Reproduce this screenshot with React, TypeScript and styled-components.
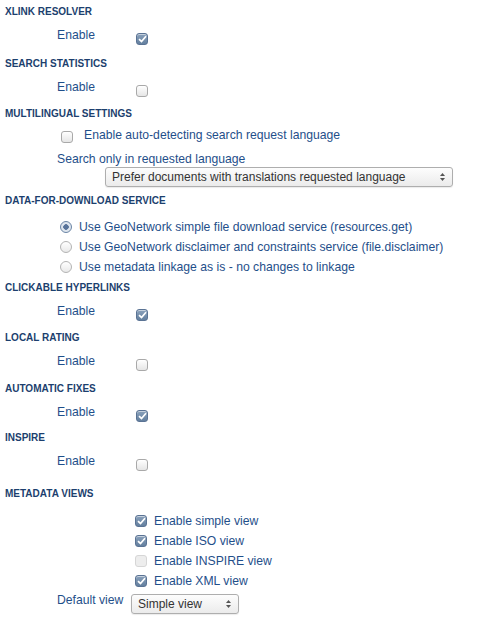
import styled, { createGlobalStyle, css } from "styled-components";

const GlobalStyle = createGlobalStyle`
  body {
    margin: 0;
    background: #fff;
    font-family: "Liberation Sans", Arial, sans-serif;
    font-size: 12.2px;
    color: #1f4f8a;
  }
`;

const Page = styled.form`
  width: 483px;
  padding-top: 5px;
`;

const Section = styled.section<{ $gap?: number }>`
  margin-bottom: ${(p) => p.$gap ?? 10}px;
`;

const Heading = styled.h2`
  margin: 0;
  padding: 0 5px;
  font-size: 10px;
  line-height: 14px;
  font-weight: bold;
  text-transform: uppercase;
  color: #1c3f6e;
`;

const Rows = styled.div<{ $top?: number }>`
  display: flex;
  flex-direction: column;
  margin-top: ${(p) => p.$top ?? 6}px;
`;

// label column + control, like the "Enable" lines
const FieldRow = styled.div<{ $top?: number }>`
  display: flex;
  align-items: flex-start;
  min-height: 20px;
  margin-top: ${(p) => p.$top ?? 0}px;
`;

const FieldLabel = styled.label<{ $lh?: number }>`
  width: 74px;
  padding-left: 57px;
  line-height: ${(p) => p.$lh ?? 20}px;
  flex-shrink: 0;
`;

const CheckRow = styled.label<{ $indent: number; $gap: number }>`
  display: flex;
  align-items: center;
  gap: ${(p) => p.$gap}px;
  padding-left: ${(p) => p.$indent}px;
  height: 20px;
  line-height: 20px;
`;

const RaisedText = styled.span`
  margin-top: -4px;
`;

const PlainLabel = styled.div`
  padding-left: 57px;
  line-height: 16px;
  margin-top: 4px;
`;

const boxBase = css`
  display: inline-flex;
  align-items: center;
  justify-content: center;
  flex-shrink: 0;
  box-sizing: border-box;
  width: 12px;
  height: 12px;
`;

const Box = styled.span<{ $checked?: boolean; $disabled?: boolean; $offset?: number }>`
  ${boxBase}
  border-radius: 3px;
  margin-top: ${(p) => p.$offset ?? 0}px;
  margin-left: ${(p) => (p.$offset ? 5 : 0)}px;
  border: 1px solid ${(p) => (p.$checked ? "#5a7394" : p.$disabled ? "#d6d6d6" : "#a9a9a9")};
  background: ${(p) =>
    p.$checked
      ? "linear-gradient(#8aa1bb, #64809f)"
      : p.$disabled
      ? "#ededed"
      : "linear-gradient(#ffffff, #e6e6e6)"};
  box-shadow: ${(p) => (p.$disabled ? "none" : "inset 0 1px 0 rgba(255,255,255,0.5)")};

  svg {
    display: block;
  }
`;

const Radio = styled.span<{ $checked?: boolean }>`
  ${boxBase}
  border-radius: 50%;
  border: 1px solid ${(p) => (p.$checked ? "#6a84a5" : "#b3b3b3")};
  background: ${(p) =>
    p.$checked
      ? "radial-gradient(circle, #58739a 0 2.5px, #dfe6ee 3px)"
      : "linear-gradient(#ffffff, #e9e9e9)"};
`;

const Select = styled.div<{ $width: number; $left: number }>`
  display: flex;
  align-items: center;
  justify-content: space-between;
  box-sizing: border-box;
  width: ${(p) => p.$width}px;
  height: 20px;
  margin-left: ${(p) => p.$left}px;
  padding: 0 6px;
  border: 1px solid #aeaeae;
  border-radius: 3px;
  background: linear-gradient(#fdfdfd, #ebebeb);
  box-shadow: 0 1px 1px rgba(0, 0, 0, 0.08);
  font-size: 12px;
  color: #333;
`;

const Arrows = styled.span`
  display: flex;
  flex-direction: column;
  gap: 2px;
  margin-right: 1px;
`;

const Check = () => (
  <svg width="9" height="8" viewBox="0 0 9 8">
    <path d="M1 4.2 L3.5 6.5 L8 1.2" fill="none" stroke="#fff" strokeWidth="1.7" />
  </svg>
);

const CheckBox = ({ checked, disabled, offset }: { checked?: boolean; disabled?: boolean; offset?: number }) => (
  <Box $checked={checked} $disabled={disabled} $offset={offset}>
    {checked && <Check />}
  </Box>
);

const SelectBox = ({ value, width, left }: { value: string; width: number; left: number }) => (
  <Select $width={width} $left={left}>
    <span>{value}</span>
    <Arrows>
      <svg width="5" height="3" viewBox="0 0 5 3">
        <path d="M0 3 L2.5 0 L5 3 Z" fill="#555" />
      </svg>
      <svg width="5" height="3" viewBox="0 0 5 3">
        <path d="M0 0 L2.5 3 L5 0 Z" fill="#555" />
      </svg>
    </Arrows>
  </Select>
);

const EnableSection = ({ title, checked, gap }: { title: string; checked?: boolean; gap?: number }) => (
  <Section $gap={gap}>
    <Heading>{title}</Heading>
    <Rows>
      <FieldRow>
        <FieldLabel>Enable</FieldLabel>
        <CheckBox checked={checked} offset={8} />
      </FieldRow>
    </Rows>
  </Section>
);

const downloadOptions = [
  { label: "Use GeoNetwork simple file download service (resources.get)", checked: true },
  { label: "Use GeoNetwork disclaimer and constraints service (file.disclaimer)" },
  { label: "Use metadata linkage as is - no changes to linkage" },
];

const views = [
  { label: "Enable simple view", checked: true },
  { label: "Enable ISO view", checked: true },
  { label: "Enable INSPIRE view", disabled: true },
  { label: "Enable XML view", checked: true },
];

const App = () => {
  return (
    <>
      <GlobalStyle />
      <Page>
        <EnableSection title="Xlink resolver" checked gap={12} />
        <EnableSection title="Search statistics" />

        <Section $gap={7}>
          <Heading>Multilingual settings</Heading>
          <Rows>
            <CheckRow $indent={61} $gap={11}>
              <CheckBox />
              <RaisedText>Enable auto-detecting search request language</RaisedText>
            </CheckRow>
            <PlainLabel>Search only in requested language</PlainLabel>
            <SelectBox value="Prefer documents with translations requested language" width={348} left={105} />
          </Rows>
        </Section>

        <Section $gap={4}>
          <Heading>Data-for-download service</Heading>
          <Rows $top={9}>
            {downloadOptions.map((o) => (
              <CheckRow key={o.label} $indent={60} $gap={7}>
                <Radio $checked={o.checked} />
                <span>{o.label}</span>
              </CheckRow>
            ))}
          </Rows>
        </Section>

        <EnableSection title="Clickable hyperlinks" checked />
        <EnableSection title="Local rating" gap={11} />
        <EnableSection title="Automatic fixes" checked gap={9} />
        <EnableSection title="Inspire" gap={16} />

        <Section>
          <Heading>Metadata views</Heading>
          <Rows $top={10}>
            {views.map((v) => (
              <CheckRow key={v.label} $indent={135} $gap={7}>
                <CheckBox checked={v.checked} disabled={v.disabled} />
                <span>{v.label}</span>
              </CheckRow>
            ))}
            <FieldRow $top={3}>
              <FieldLabel $lh={12}>Default view</FieldLabel>
              <SelectBox value="Simple view" width={108} left={0} />
            </FieldRow>
          </Rows>
        </Section>
      </Page>
    </>
  );
};

export default App;
